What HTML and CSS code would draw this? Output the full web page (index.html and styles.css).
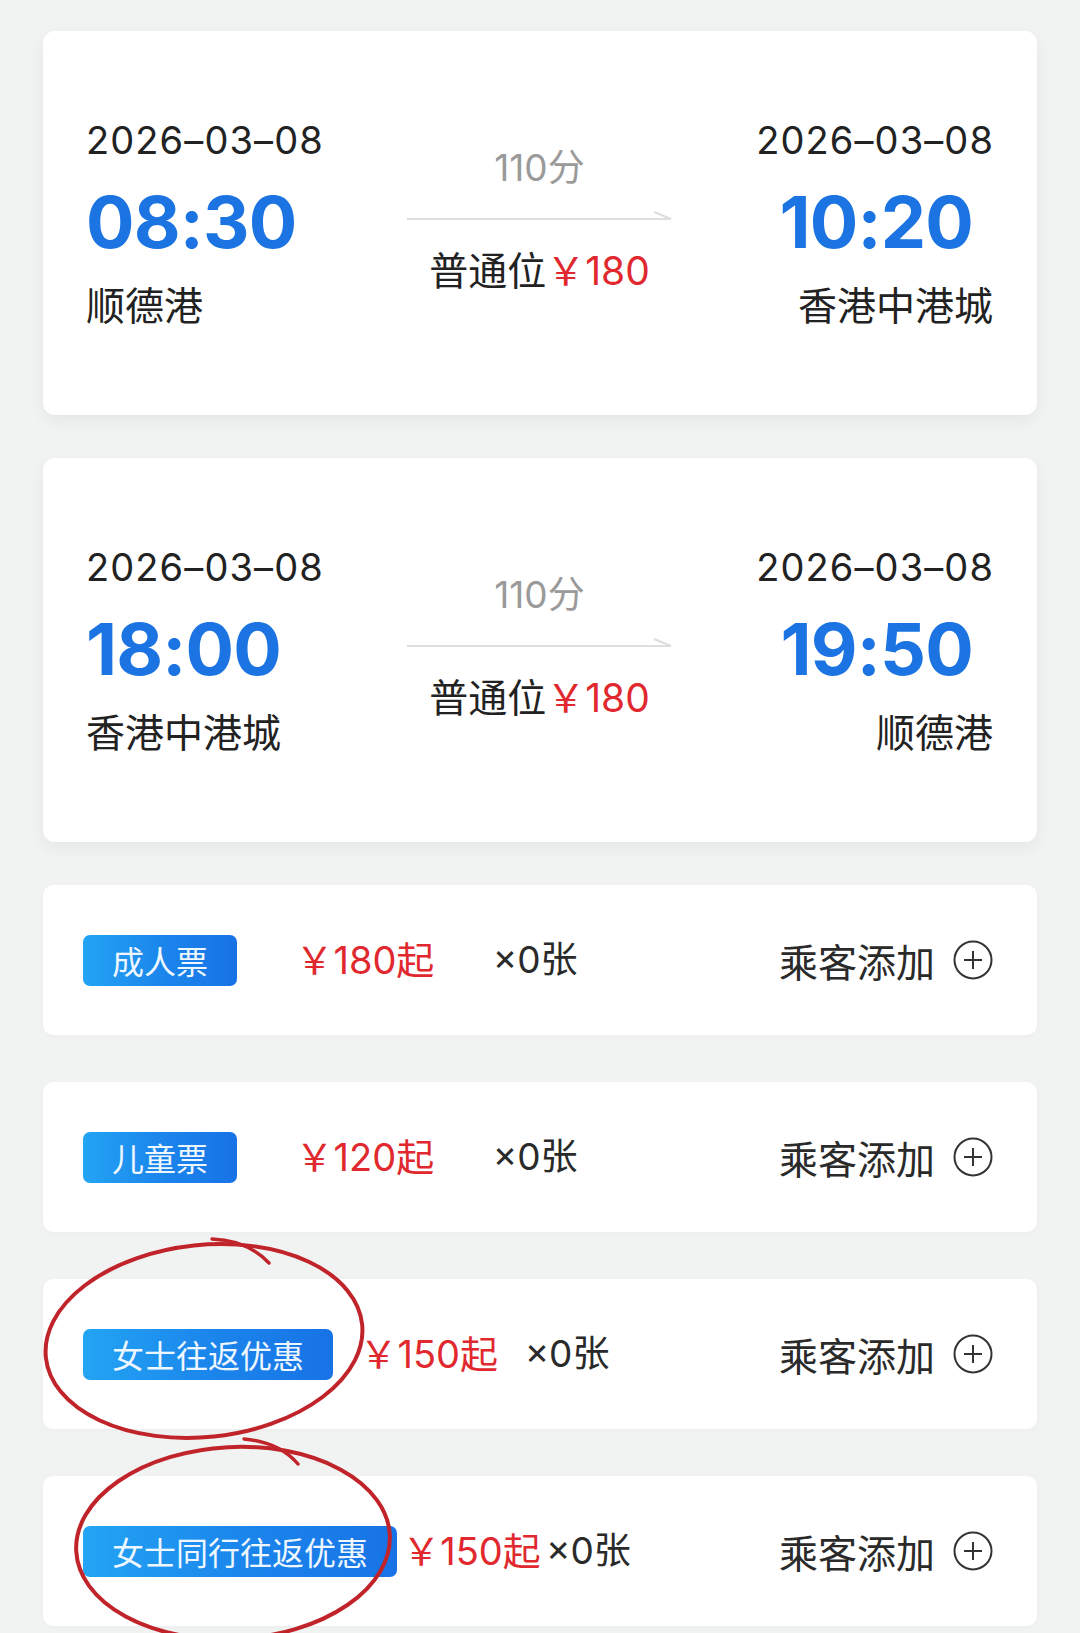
FILE: index.html
```html
<!DOCTYPE html>
<html lang="zh-CN">
<head>
<meta charset="utf-8">
<title>船票选择</title>
<link rel="stylesheet" href="styles.css">
</head>
<body>
<div class="page">
  <section class="trip">
    <div class="end end-dep">
      <div class="date">2026–03–08</div>
      <div class="time">08:30</div>
      <div class="station">顺德港</div>
    </div>
    <div class="mid">
      <div class="dur">110分</div>
      <svg class="arrow" width="265" height="12" viewBox="0 0 265 12"><path d="M0 9 H264 L247 2" fill="none" stroke="#dedede" stroke-width="2"/></svg>
      <div class="fare">普通位<span class="yen">￥180</span></div>
    </div>
    <div class="end end-arr">
      <div class="date">2026–03–08</div>
      <div class="time">10:20</div>
      <div class="station">香港中港城</div>
    </div>
  </section>

  <section class="trip">
    <div class="end end-dep">
      <div class="date">2026–03–08</div>
      <div class="time">18:00</div>
      <div class="station">香港中港城</div>
    </div>
    <div class="mid">
      <div class="dur">110分</div>
      <svg class="arrow" width="265" height="12" viewBox="0 0 265 12"><path d="M0 9 H264 L247 2" fill="none" stroke="#dedede" stroke-width="2"/></svg>
      <div class="fare">普通位<span class="yen">￥180</span></div>
    </div>
    <div class="end end-arr">
      <div class="date">2026–03–08</div>
      <div class="time">19:50</div>
      <div class="station">顺德港</div>
    </div>
  </section>

  <section class="ticket">
    <div class="tleft">
      <div class="cell"><span class="badge">成人票</span></div>
      <div class="cell price">￥180起</div>
      <div class="cell count">×0张</div>
    </div>
    <div class="add">乘客添加<svg class="plus" width="40" height="40" viewBox="0 0 40 40"><circle cx="20" cy="20" r="18.5" fill="none" stroke="#333" stroke-width="2"/><path d="M11 20 H29 M20 11 V29" stroke="#333" stroke-width="2"/></svg></div>
  </section>

  <section class="ticket">
    <div class="tleft">
      <div class="cell"><span class="badge">儿童票</span></div>
      <div class="cell price">￥120起</div>
      <div class="cell count">×0张</div>
    </div>
    <div class="add">乘客添加<svg class="plus" width="40" height="40" viewBox="0 0 40 40"><circle cx="20" cy="20" r="18.5" fill="none" stroke="#333" stroke-width="2"/><path d="M11 20 H29 M20 11 V29" stroke="#333" stroke-width="2"/></svg></div>
  </section>

  <section class="ticket">
    <div class="tleft">
      <div class="cell"><span class="badge">女士往返优惠</span></div>
      <div class="cell price">￥150起</div>
      <div class="cell count">×0张</div>
    </div>
    <div class="add">乘客添加<svg class="plus" width="40" height="40" viewBox="0 0 40 40"><circle cx="20" cy="20" r="18.5" fill="none" stroke="#333" stroke-width="2"/><path d="M11 20 H29 M20 11 V29" stroke="#333" stroke-width="2"/></svg></div>
  </section>

  <section class="ticket">
    <div class="tleft">
      <div class="cell"><span class="badge">女士同行往返优惠</span></div>
      <div class="cell price">￥150起</div>
      <div class="cell count">×0张</div>
    </div>
    <div class="add">乘客添加<svg class="plus" width="40" height="40" viewBox="0 0 40 40"><circle cx="20" cy="20" r="18.5" fill="none" stroke="#333" stroke-width="2"/><path d="M11 20 H29 M20 11 V29" stroke="#333" stroke-width="2"/></svg></div>
  </section>
</div>

<svg class="marks" width="1080" height="1633" viewBox="0 0 1080 1633">
  <ellipse cx="204" cy="1341" rx="159" ry="96" transform="rotate(-6 204 1341)" fill="none" stroke="#c0242a" stroke-width="4"/>
  <path d="M212 1239 C236 1240, 256 1249, 269 1263" fill="none" stroke="#c0242a" stroke-width="3.4" stroke-linecap="round"/>
  <ellipse cx="233" cy="1543" rx="157" ry="96" transform="rotate(-3 233 1543)" fill="none" stroke="#c0242a" stroke-width="4"/>
  <path d="M244 1439 C268 1441, 286 1450, 298 1464" fill="none" stroke="#c0242a" stroke-width="3.4" stroke-linecap="round"/>
</svg>
</body>
</html>
```

FILE: styles.css
```css
html, body {
  margin: 0;
  padding: 0;
}

body {
  background: #f1f2f2;
  font-family: Inter, "Noto Sans CJK SC", sans-serif;
  color: #222;
  position: relative;
  width: 1080px;
  height: 1633px;
  overflow: hidden;
}

.page {
  padding: 31px 43px 0 43px;
  display: flex;
  flex-direction: column;
}

.trip {
  height: 384px;
  box-sizing: border-box;
  background: #fff;
  border-radius: 12px;
  box-shadow: 0 6px 16px rgba(0, 0, 0, 0.05);
  display: flex;
  align-items: center;
  padding: 0 44px 3px 43px;
  margin-bottom: 43px;
}

.end {
  flex: 1;
  display: flex;
  flex-direction: column;
}

.end-dep {
  align-items: flex-start;
}

.end-arr {
  align-items: flex-end;
}

.date {
  font-size: 38px;
  line-height: 44px;
  color: #222;
  letter-spacing: 1.1px;
}

.end-arr .date {
  margin-right: -1px;
}

.time {
  font-size: 72px;
  line-height: 76px;
  font-weight: 700;
  color: #1b74e2;
  margin-top: 22px;
  letter-spacing: -0.8px;
}

.end-arr .time {
  margin-right: 20px;
}

.station {
  font-family: "Noto Sans CJK SC", sans-serif;
  font-size: 39px;
  line-height: 46px;
  margin-top: 20px;
  color: #222;
}

.mid {
  width: 265px;
  display: flex;
  flex-direction: column;
  align-items: center;
  margin-bottom: 3px;
}

.dur {
  font-size: 37px;
  line-height: 44px;
  color: #9a9a9a;
}

.arrow {
  display: block;
  margin: 20px 0 26px;
}

.fare {
  font-size: 39px;
  line-height: 46px;
  color: #222;
  white-space: nowrap;
}

.yen {
  color: #e0282e;
}

.ticket {
  height: 150px;
  box-sizing: border-box;
  background: #fff;
  border-radius: 10px;
  box-shadow: 0 2px 6px rgba(0, 0, 0, 0.02);
  display: flex;
  align-items: center;
  padding: 0 44px 0 40px;
  margin-bottom: 47px;
}

.tleft {
  width: 553px;
  display: flex;
  align-items: center;
}

.cell {
  flex: 1 1 auto;
  white-space: nowrap;
}

.badge {
  display: inline-block;
  height: 51px;
  line-height: 51px;
  padding: 0 29px;
  border-radius: 7px;
  background: linear-gradient(90deg, #23a4f4 0%, #1b86ec 50%, #1873e6 100%);
  color: #eef7ff;
  font-family: "Noto Sans CJK SC", sans-serif;
  font-size: 32px;
}

.price {
  font-size: 38px;
  line-height: 46px;
  color: #e0282e;
}

.count {
  font-size: 37px;
  line-height: 46px;
  color: #2a2a2a;
}

.add {
  margin-left: auto;
  display: flex;
  align-items: center;
  gap: 18px;
  font-family: "Noto Sans CJK SC", sans-serif;
  font-size: 39px;
  line-height: 46px;
  color: #2a2a2a;
}

.plus {
  display: block;
}

.marks {
  position: absolute;
  left: 0;
  top: 0;
  pointer-events: none;
}
```
